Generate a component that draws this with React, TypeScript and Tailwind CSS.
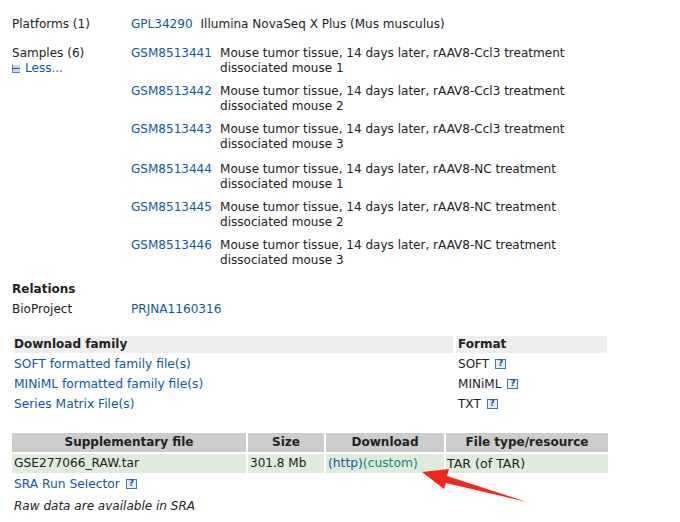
const font = { fontFamily: '"DejaVu Sans", Verdana, sans-serif' };

function Help() {
  return (
    <span className="inline-flex w-[11px] h-[10px] items-center justify-center border border-[#3f78b5] bg-[#e8f0f8] text-[#1f4f8a] text-[9px] leading-none font-bold ml-[6px] align-[2px]">
      ?
    </span>
  );
}

const A = ({ children, cls = "" }: { children: React.ReactNode; cls?: string }) => (
  <a className={"text-[#0f57a8] " + cls}>{children}</a>
);

const samples = [
  ["GSM8513441", "Mouse tumor tissue, 14 days later, rAAV8-Ccl3 treatment", "dissociated mouse 1"],
  ["GSM8513442", "Mouse tumor tissue, 14 days later, rAAV8-Ccl3 treatment", "dissociated mouse 2"],
  ["GSM8513443", "Mouse tumor tissue, 14 days later, rAAV8-Ccl3 treatment", "dissociated mouse 3"],
  ["GSM8513444", "Mouse tumor tissue, 14 days later, rAAV8-NC treatment", "dissociated mouse 1"],
  ["GSM8513445", "Mouse tumor tissue, 14 days later, rAAV8-NC treatment", "dissociated mouse 2"],
  ["GSM8513446", "Mouse tumor tissue, 14 days later, rAAV8-NC treatment", "dissociated mouse 3"],
];

export default function App() {
  return (
    <div style={font} className="relative w-[680px] h-[522px] overflow-hidden bg-white text-[#222] text-[12.04px] leading-[15px] pl-[12px] pt-[17px]">
      <div className="flex">
        <div className="w-[119px]">Platforms (1)</div>
        <div>
          <A>GPL34290</A>
          <span className="ml-[8px]">Illumina NovaSeq X Plus (Mus musculus)</span>
        </div>
      </div>

      <div className="flex mt-[14px]">
        <div className="w-[119px]">
          <div>Samples (6)</div>
          <div className="flex items-center">
            <span className="inline-flex w-[8px] h-[8px] items-center border-l border-b border-[#5a7fb0] bg-[#c9d6e8] mr-[5px]">
              <span className="w-full h-px bg-[#2a5a9a]" />
            </span>
            <A>Less...</A>
          </div>
        </div>
        <div className="flex flex-col gap-[8px]">
          {samples.map(([id, a, b], i) => (
            <div key={id} className={i === 3 ? "flex mt-[2px]" : "flex"}>
              <div className="w-[89px]"><A>{id}</A></div>
              <div>
                <div>{a}</div>
                <div>{b}</div>
              </div>
            </div>
          ))}
        </div>
      </div>

      <div className="font-bold mt-[14px]">Relations</div>
      <div className="flex mt-[5px]">
        <div className="w-[119px]">BioProject</div>
        <A cls="text-[12.1px]">PRJNA1160316</A>
      </div>

      <div className="grid grid-cols-[440px_151px] gap-x-[3px] ml-[1px] mt-[19px]">
        <div className="bg-[#eeeeee] font-bold h-[17px] pl-[1px] leading-[17px]">Download family</div>
        <div className="bg-[#eeeeee] font-bold h-[17px] pl-[2px] leading-[17px]">Format</div>
        <div className="h-[20px] pl-[1px] pt-[4px] text-[12.25px]"><A>SOFT formatted family file(s)</A></div>
        <div className="h-[20px] pl-[2px] pt-[4px]">SOFT<Help /></div>
        <div className="h-[20px] pl-[1px] pt-[4px] text-[12.25px]"><A>MINiML formatted family file(s)</A></div>
        <div className="h-[20px] pl-[2px] pt-[4px]">MINiML<Help /></div>
        <div className="h-[20px] pl-[1px] pt-[4px] text-[12.25px]"><A>Series Matrix File(s)</A></div>
        <div className="h-[20px] pl-[2px] pt-[4px]">TXT<Help /></div>
      </div>

      <div className="grid grid-cols-[234px_76px_118px_162px] gap-x-[2px] gap-y-[2px] mt-[20px]">
        <div className="bg-[#cccccc] font-bold h-[19px] leading-[19px] text-center">Supplementary file</div>
        <div className="bg-[#cccccc] font-bold h-[19px] leading-[19px] text-center">Size</div>
        <div className="bg-[#cccccc] font-bold h-[19px] leading-[19px] text-center">Download</div>
        <div className="bg-[#cccccc] font-bold h-[19px] leading-[19px] text-center">File type/resource</div>
        <div className="bg-[#dfebdc] h-[19px] leading-[19px] pl-[2px] text-[12.2px]">GSE277066_RAW.tar</div>
        <div className="bg-[#dfebdc] h-[19px] leading-[19px] pl-[2px]">301.8 Mb</div>
        <div className="bg-[#dfebdc] h-[19px] leading-[19px] pl-[2px] text-[12.3px]">
          <A>(http)</A><a className="text-[#0e8a78]">(custom)</a>
        </div>
        <div className="bg-[#dfebdc] h-[19px] leading-[19px] pl-[1px] text-[12.6px]">TAR (of TAR)</div>
      </div>

      <div className="ml-[2px] mt-[4px]"><A cls="text-[12.27px]">SRA Run Selector</A><Help /></div>
      <div className="ml-[2px] mt-[7px] italic">Raw data are available in SRA</div>

      <svg className="absolute left-[415px] top-[460px]" width="120" height="50" viewBox="0 0 120 50">
        <polygon points="7,12 34,9 32,16 112,42 31,23 29,29" fill="#f5261c" />
      </svg>
    </div>
  );
}
